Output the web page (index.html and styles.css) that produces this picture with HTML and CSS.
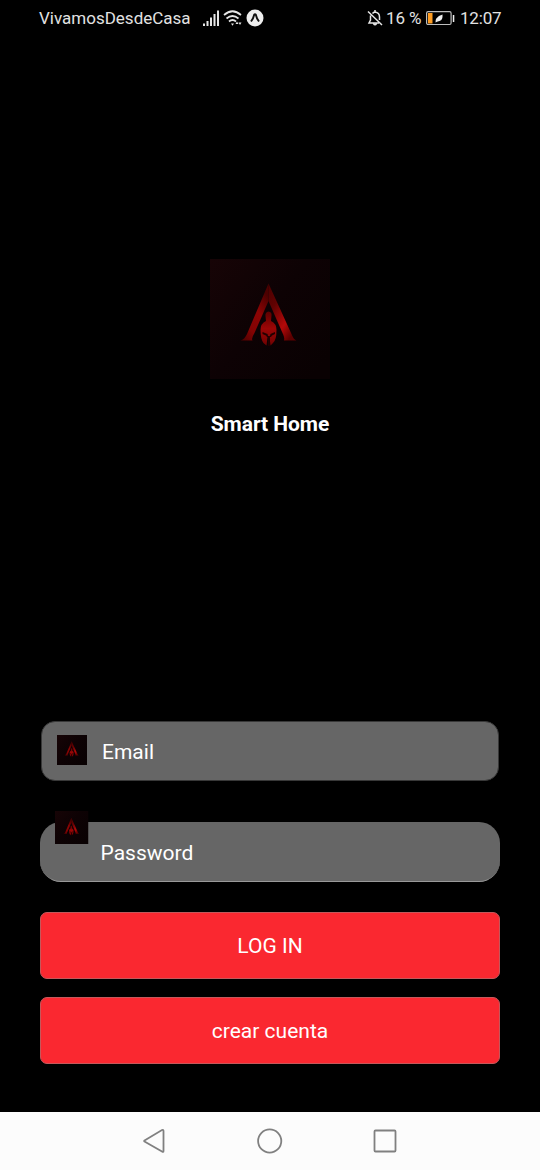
FILE: index.html
```html
<!DOCTYPE html>
<html lang="es">
<head>
<meta charset="utf-8">
<title>Smart Home</title>
<link rel="stylesheet" href="styles.css">
</head>
<body>
<svg class="defs" aria-hidden="true">
  <defs>
    <linearGradient id="tile" x1="0" y1="0" x2="1" y2="0.8">
      <stop offset="0" stop-color="#170406"/><stop offset="0.5" stop-color="#0d0204"/><stop offset="1" stop-color="#090102"/>
    </linearGradient>
    <linearGradient id="legL" x1="0" y1="1" x2="0.6" y2="0">
      <stop offset="0" stop-color="#4a0000"/><stop offset="0.3" stop-color="#820303"/><stop offset="0.65" stop-color="#8c0404"/><stop offset="1" stop-color="#4c0000"/>
    </linearGradient>
    <linearGradient id="legR" x1="0" y1="0" x2="0.7" y2="1">
      <stop offset="0" stop-color="#4c0000"/><stop offset="0.35" stop-color="#600202"/><stop offset="0.75" stop-color="#b40909"/><stop offset="1" stop-color="#5c0000"/>
    </linearGradient>
    <linearGradient id="helmet" x1="0" y1="0" x2="0" y2="1">
      <stop offset="0" stop-color="#5c0000"/><stop offset="0.5" stop-color="#9c0606"/><stop offset="1" stop-color="#700202"/>
    </linearGradient>
    <symbol id="logo" viewBox="0 0 120 120">
      <rect width="120" height="120" fill="url(#tile)"/>
      <path fill="url(#legL)" d="M58.500 24.500V42L44.500 74Q41 79.500 42.500 81.500H30.500Q34.500 80.500 37 75z"/>
      <path fill="url(#legR)" d="M58.500 24.500L81.500 75q2 5.500 5 6.500H74q1-2.500-1.500-7.500L58.500 42z"/>
      <path fill="url(#helmet)" d="M55.500 57q-.5-4 3-4.500 3.500.500 3 4l-.5 5.500q5.500 2.500 5.500 9 0 10-3.500 13l-2.500 2.500-1-8.500h-2l-1 8.500-3-2.500Q50.500 80 50.500 71q0-6.500 5.500-9z"/>
      <path fill="#210000" d="M52.500 73l5 2 .8 3h-1.300l-1-1.500-3.500-1.500zM65 73l-4.500 2-.8 3h1.300l1-1.500 3-1.500zM58 77h1.800v10H58z"/>
    </symbol>
  </defs>
</svg>

<header class="status">
  <span class="carrier">VivamosDesdeCasa</span>
  <svg class="signal" width="18" height="18" viewBox="0 0 18 18" fill="#e5e5e5">
    <path d="M1 14.500h2V17H1zM4.500 12h2v5h-2zM8 8.500h2V17H8zM11.500 5h2v12h-2zM15 1.500h2V17h-2z"/>
  </svg>
  <svg class="wifi" width="20" height="18" viewBox="0 0 20 18">
    <g fill="none" stroke="#e5e5e5" stroke-width="1.700"><path d="M1 6Q9.500-1.500 18 6M3.500 9.500q6-5 12 0M6 12.500q3.500-3 7 0"/></g>
    <path fill="#e5e5e5" d="M8 14.500h3l-1.500 2.300zM12.500 15l1.500-2.500 1.500 2.500zM15.500 13.500h3L17 16z"/>
  </svg>
  <svg class="app" width="18" height="18" viewBox="0 0 18 18">
    <circle cx="9" cy="9" r="8.500" fill="#eee"/>
    <path d="M5 12.500Q7.500 9 8.200 5.700q.8-1 1.600 0Q10.500 9 13 12.500" fill="none" stroke="#111" stroke-width="1.900"/>
  </svg>
  <svg class="bell" width="16" height="18" viewBox="0 0 16 18" fill="none" stroke="#e5e5e5" stroke-width="1.500">
    <path d="M5.500 4.500Q6.500 3.300 8 3q4.500.700 4.500 5v3M3.500 6.500V11L2 14h10M8 1v2M6.500 14.500q1.500 2.500 3 0M1 2.500L15 16"/>
  </svg>
  <span class="percent">16 %</span>
  <svg class="battery" width="30" height="16" viewBox="0 0 30 16">
    <rect x="1.600" y="1.700" width="24.500" height="12.800" rx="1.500" fill="none" stroke="#bdbdbd" stroke-width="1.200"/>
    <path fill="#ff9d22" d="M3 3h4.500v10.500H3z"/>
    <path fill="#eee" d="M17.500 4.500q.5 5.500-3 6.500l-1.800.5-2.200 1q0-3 .8-4Q13.500 5.500 17.500 4.500zM27.800 5h1.500v7h-1.500z"/>
  </svg>
  <span class="clock">12:07</span>
</header>

<main class="screen">
  <section class="brand">
    <svg class="brand-logo"><use href="#logo"/></svg>
    <h1>Smart Home</h1>
  </section>
  <form class="form">
    <div class="field email">
      <svg class="field-logo"><use href="#logo"/></svg><span>Email</span>
    </div>
    <div class="field password">
      <svg class="field-logo"><use href="#logo"/></svg><span>Password</span>
    </div>
    <button class="btn" type="button">LOG IN</button>
    <button class="btn" type="button">crear cuenta</button>
  </form>
</main>

<nav class="navbar">
  <svg width="24" height="28" viewBox="0 0 24 28"><path d="M2.500 13.500L20 3q1.500-.500 1.500 1v20q0 1.500-1.500.500L2.500 14.500q-.7-.5 0-1z"/></svg>
  <svg width="28" height="28" viewBox="0 0 28 28"><circle cx="14.700" cy="14" r="11.600"/></svg>
  <svg width="24" height="28" viewBox="0 0 24 28"><rect x="1.500" y="3.500" width="21" height="21" rx="1"/></svg>
</nav>
</body>
</html>
```
FILE: styles.css
```css
* { box-sizing: border-box; }
body {
  margin: 0;
  height: 1170px;
  display: flex;
  flex-direction: column;
  background: #000;
  color: #fff;
  font-family: Roboto, sans-serif;
  overflow: hidden;
}
svg { display: block; flex: none; }
.defs { position: absolute; width: 0; height: 0; }

.status {
  height: 37px;
  padding: 0 38px 1px 39px;
  display: flex;
  align-items: center;
  color: #e2e2e2;
  font-size: 17px;
  white-space: nowrap;
}
.carrier { width: 163px; }
.wifi { margin-left: 3px; }
.app { margin-left: 2.500px; }
.bell { margin-left: auto; }
.percent { margin-left: 3px; width: 36px; letter-spacing: -0.1px; }
.battery { margin-left: 3px; }
.clock { width: 42px; margin-left: 5px; letter-spacing: -0.2px; }

.screen {
  flex: 1;
  display: flex;
  flex-direction: column;
  justify-content: space-between;
  padding: 221.500px 40px 48px;
}
.brand { display: flex; flex-direction: column; align-items: center; gap: 33.500px; }
.brand-logo { width: 120px; height: 120px; }
h1 { margin: 0; font-size: 21px; line-height: 24px; font-weight: 700; letter-spacing: -0.05px; }

.form { display: flex; flex-direction: column; }
.field {
  display: flex;
  height: 60px;
  background: #666;
  font-size: 21px;
  line-height: 24px;
}
.email {
  align-items: center;
  margin: 0 1px 41px;
  padding-left: 15px;
  gap: 15px;
  border: 1px solid #383838;
  border-radius: 14px;
}
.email .field-logo { width: 30px; height: 30px; margin-top: -3px; }
.email span { margin-top: 2px; }
.password {
  padding-left: 15px;
  gap: 12px;
  margin-bottom: 30px;
  border-bottom: 1px solid #999;
  border-radius: 21px;
}
.password .field-logo { width: 33.500px; height: 33.500px; margin-top: -11.500px; }
.password span { margin-top: 19px; }
.btn {
  height: 67px;
  padding: 0;
  border: 1px solid #c4585b;
  border-radius: 7px;
  background: #fa2830;
  color: #fff;
  font: 21px/24px Roboto, sans-serif;
}
.btn + .btn { margin-top: 18px; }

.navbar {
  height: 58px;
  padding: 0 143.500px 0 142px;
  display: flex;
  align-items: center;
  justify-content: space-between;
  background: #fcfcfc;
}
.navbar svg { fill: none; stroke: #808080; stroke-width: 1.800; }
```
